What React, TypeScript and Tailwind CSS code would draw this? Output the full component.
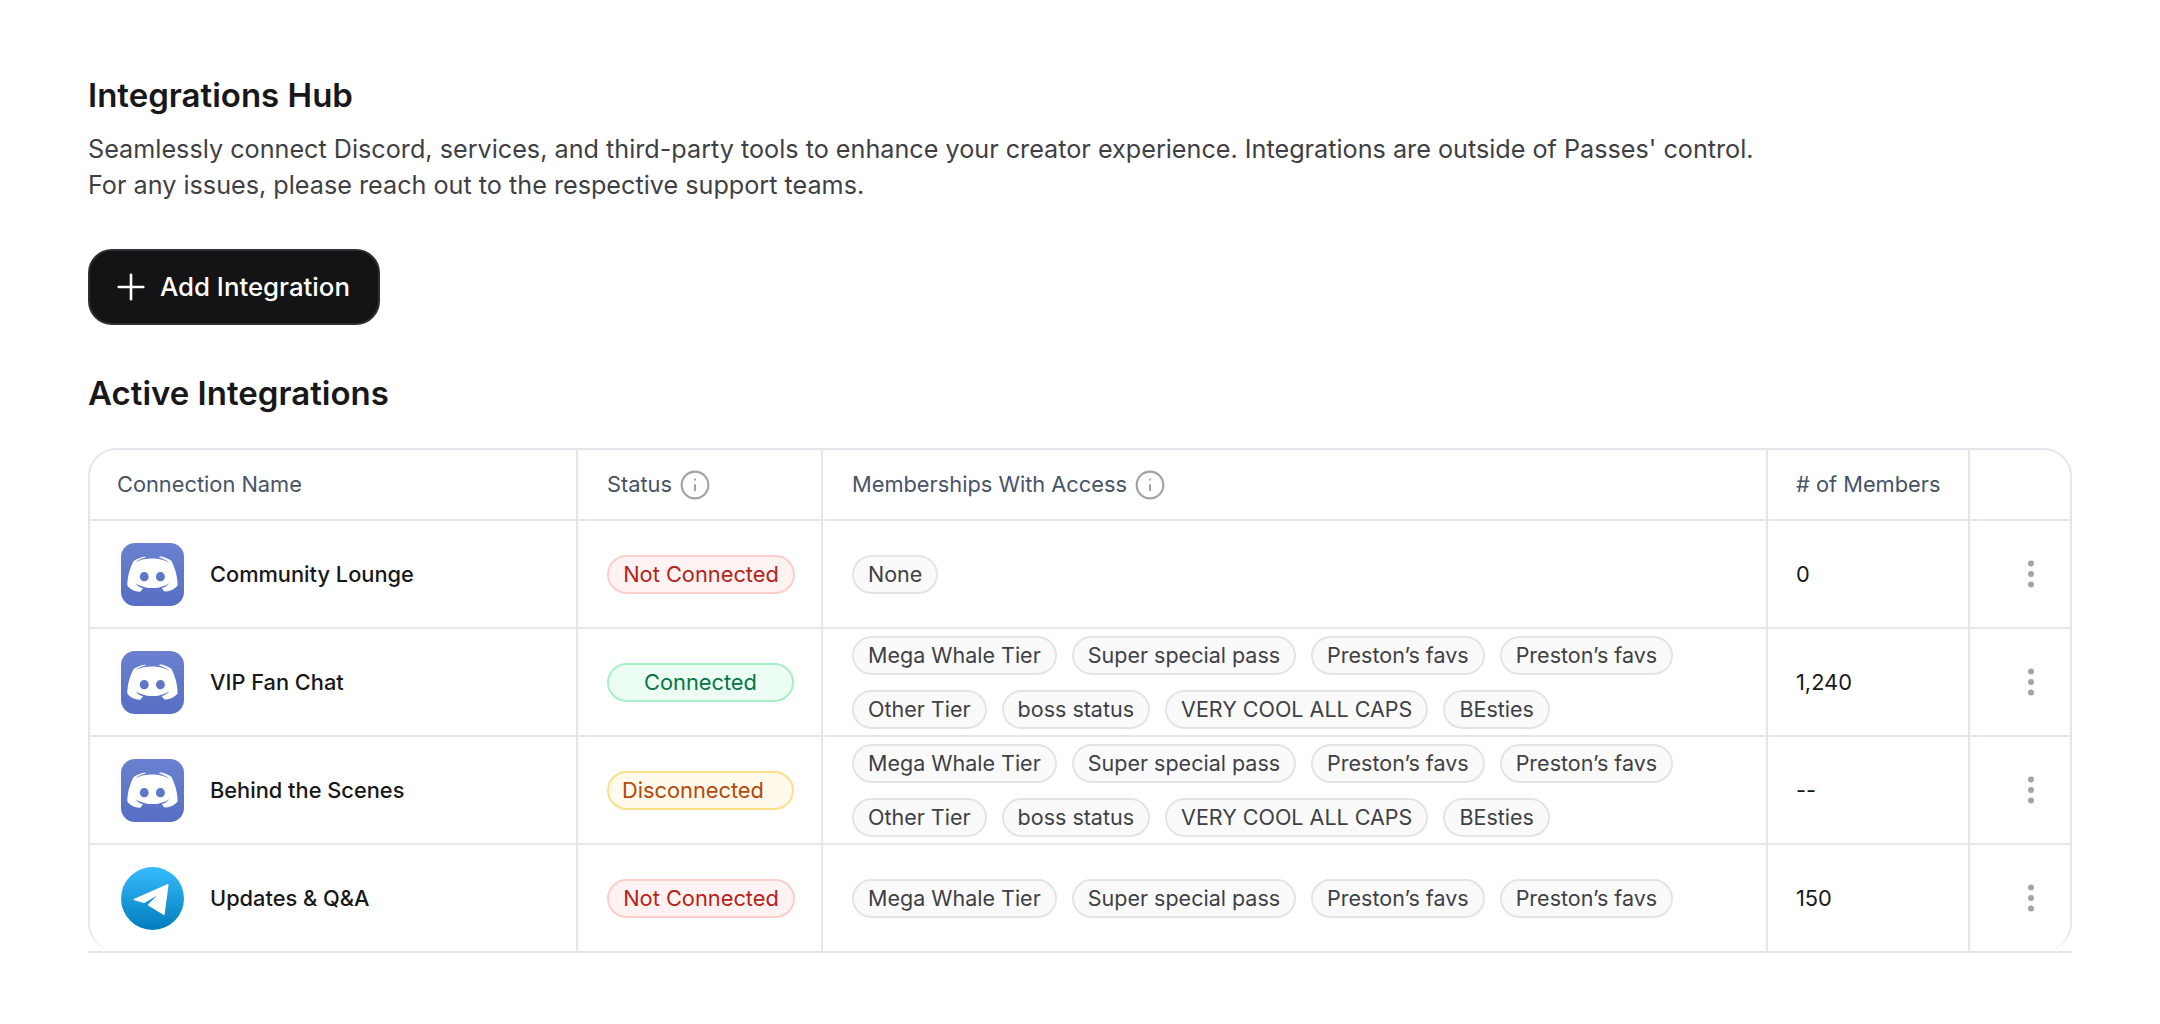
import { Info, MoreVertical, Plus } from "lucide-react";

type Status = "not" | "connected" | "disconnected";

const allTiers = ["Mega Whale Tier", "Super special pass", "Preston’s favs", "Preston’s favs"];
const moreTiers = ["Other Tier", "boss status", "VERY COOL ALL CAPS", "BEsties"];

const connections: {
  name: string;
  kind: "discord" | "telegram";
  status: Status;
  tiers: string[];
  members: string;
}[] = [
  { name: "Community Lounge", kind: "discord", status: "not", tiers: ["None"], members: "0" },
  { name: "VIP Fan Chat", kind: "discord", status: "connected", tiers: [...allTiers, ...moreTiers], members: "1,240" },
  { name: "Behind the Scenes", kind: "discord", status: "disconnected", tiers: [...allTiers, ...moreTiers], members: "--" },
  { name: "Updates & Q&A", kind: "telegram", status: "not", tiers: allTiers, members: "150" },
];

const DiscordIcon = () => (
  <div className="w-[63px] h-[63px] rounded-[14px] bg-gradient-to-b from-[#6b80cf] to-[#566fc4] flex items-center justify-center">
    <svg viewBox="4.4 5.2 15.2 11.2" className="w-[53px] h-[39px]" fill="#fff" fillRule="evenodd">
      <path d="M14.104 5.683h-.03l-.202.2c2.073.6 3.076 1.537 3.076 1.537-1.336-.668-2.54-1.002-3.744-1.137-.87-.135-1.74-.064-2.475 0h-.2c-.47 0-1.47.2-2.81.735-.467.203-.735.336-.735.336s1.002-1.002 3.21-1.537l-.135-.135s-1.672-.064-3.477 1.27c0 0-1.805 3.144-1.805 7.02 0 0 1 1.74 3.74 1.806 0 0 .4-.533.805-1.002-1.54-.468-2.14-1.404-2.14-1.404s.134.066.335.2h.06c.03 0 .044.015.06.03v.006c.016.016.03.03.06.03.33.136.66.27.93.4.466.202 1.065.403 1.8.536.93.135 1.996.2 3.21 0 .6-.135 1.2-.267 1.8-.535.39-.2.87-.4 1.397-.737 0 0-.6.936-2.205 1.404.33.466.795 1 .795 1 2.74-.06 3.81-1.8 3.81-1.8 0-3.87-1.815-7.02-1.815-7.02-1.635-1.214-3.165-1.26-3.435-1.26l.056-.02zm.168 4.413c.703 0 1.27.6 1.27 1.335 0 .74-.57 1.34-1.27 1.34-.7 0-1.27-.6-1.27-1.334.002-.74.573-1.338 1.27-1.338zm-4.64 0c.7 0 1.266.6 1.266 1.335 0 .74-.57 1.34-1.27 1.34-.7 0-1.27-.6-1.27-1.334 0-.74.57-1.338 1.27-1.338z" />
    </svg>
  </div>
);

const TelegramIcon = () => (
  <svg viewBox="0 0 63 63" className="w-[63px] h-[63px]">
    <defs>
      <linearGradient id="tg" x1="0" y1="0" x2="0" y2="1">
        <stop offset="0" stopColor="#37bbfe" />
        <stop offset="1" stopColor="#007dbb" />
      </linearGradient>
    </defs>
    <circle cx="31.5" cy="31.5" r="31.5" fill="url(#tg)" />
    <path
      d="M13 32.5 47 17.5 43 47.5 27.5 38 40 25.5 23 35.5Z"
      fill="#fff"
      stroke="#fff"
      strokeWidth="1.2"
      strokeLinejoin="round"
    />
  </svg>
);

const StatusPill = ({ status }: { status: Status }) => {
  if (status === "connected") {
    return (
      <span className="inline-flex items-center justify-center w-[187px] h-[39px] rounded-full border-2 border-[#a9efc5] bg-[#ecfdf3] text-[#067647]">
        Connected
      </span>
    );
  }
  if (status === "disconnected") {
    return (
      <span className="inline-flex items-center w-[187px] h-[39px] pl-[13px] rounded-full border-2 border-[#fedf89] bg-[#fffaeb] text-[#b54708]">
        Disconnected
      </span>
    );
  }
  return (
    <span className="inline-flex items-center justify-center w-[188px] h-[39px] rounded-full border-2 border-[#fecdca] bg-[#fef3f2] text-[#b42318]">
      Not Connected
    </span>
  );
};

const App = () => {
  return (
    <div className="min-h-[1024px] bg-white pt-[73px] px-[88px] font-['Inter',sans-serif] text-[#18181b]">
      <h1 className="text-[33px] leading-[44px] font-semibold">Integrations Hub</h1>
      <p className="mt-[14px] text-[25.2px] leading-[36px] text-[#3f3f46]">
        Seamlessly connect Discord, services, and third-party tools to enhance your creator experience. Integrations are outside of Passes' control.
        <br />
        For any issues, please reach out to the respective support teams.
      </p>
      <button className="mt-[46px] flex items-center gap-[8px] w-[292px] h-[76px] pl-[20px] rounded-[24px] bg-[#141416] border-2 border-[#2f2f33] text-white text-[25.8px] font-medium">
        <Plus className="w-[42px] h-[42px]" strokeWidth={1.5} />
        Add Integration
      </button>
      <h2 className="mt-[46px] text-[33px] leading-[44px] font-semibold">Active Integrations</h2>

      <div className="mt-[33px] w-[1984px] border-b-2 border-[#e4e4e7]">
        <div className="rounded-t-[28px] rounded-b-[28px] border-2 border-b-0 border-[#e4e7ec] overflow-hidden">
          <table className="w-full table-fixed border-collapse text-[21.8px]">
            <colgroup>
              <col className="w-[487px]" />
              <col className="w-[245px]" />
              <col className="w-[945px]" />
              <col className="w-[202px]" />
              <col />
            </colgroup>
            <thead>
              <tr className="h-[70px] text-left text-[#475467] font-normal">
                <th className="pl-[27px] font-normal">Connection Name</th>
                <th className="pl-[29px] font-normal border-l-2 border-[#e4e7ec]">
                  <span className="flex items-center gap-[7px]">
                    Status <Info className="w-[32px] h-[32px] text-[#a1a1aa]" strokeWidth={1.6} />
                  </span>
                </th>
                <th className="pl-[29px] font-normal border-l-2 border-[#e4e7ec]">
                  <span className="flex items-center gap-[7px]">
                    Memberships With Access <Info className="w-[32px] h-[32px] text-[#a1a1aa]" strokeWidth={1.6} />
                  </span>
                </th>
                <th className="pl-[28px] font-normal border-l-2 border-[#e4e7ec]"># of Members</th>
                <th className="border-l-2 border-[#e4e7ec]" />
              </tr>
            </thead>
            <tbody>
              {connections.map((connection) => (
                <tr key={connection.name} className="h-[108px] last:h-[107px] border-t-2 border-[#e4e7ec]">
                  <td className="pl-[31px]">
                    <div className="flex items-center gap-[26px]">
                      {connection.kind === "discord" ? <DiscordIcon /> : <TelegramIcon />}
                      <span className="font-medium">{connection.name}</span>
                    </div>
                  </td>
                  <td className="pl-[29px] border-l-2 border-[#e4e7ec]">
                    <StatusPill status={connection.status} />
                  </td>
                  <td className="pl-[29px] border-l-2 border-[#e4e7ec]">
                    <div className="flex flex-wrap gap-x-[15px] gap-y-[15px] w-[860px]">
                      {connection.tiers.map((tier, index) => (
                        <span
                          key={index}
                          className="h-[39px] px-[14px] inline-flex items-center rounded-full border-2 border-[#e4e4e7] bg-[#fafafa] text-[21.5px] text-[#3f3f46]"
                        >
                          {tier}
                        </span>
                      ))}
                    </div>
                  </td>
                  <td className="pl-[28px] border-l-2 border-[#e4e7ec]">{connection.members}</td>
                  <td className="border-l-2 border-[#e4e7ec]">
                    <div className="flex justify-center">
                      <MoreVertical className="w-[36px] h-[36px] text-[#a1a1aa] ml-[22px]" strokeWidth={2} />
                    </div>
                  </td>
                </tr>
              ))}
            </tbody>
          </table>
        </div>
      </div>
    </div>
  );
};

export default App;
